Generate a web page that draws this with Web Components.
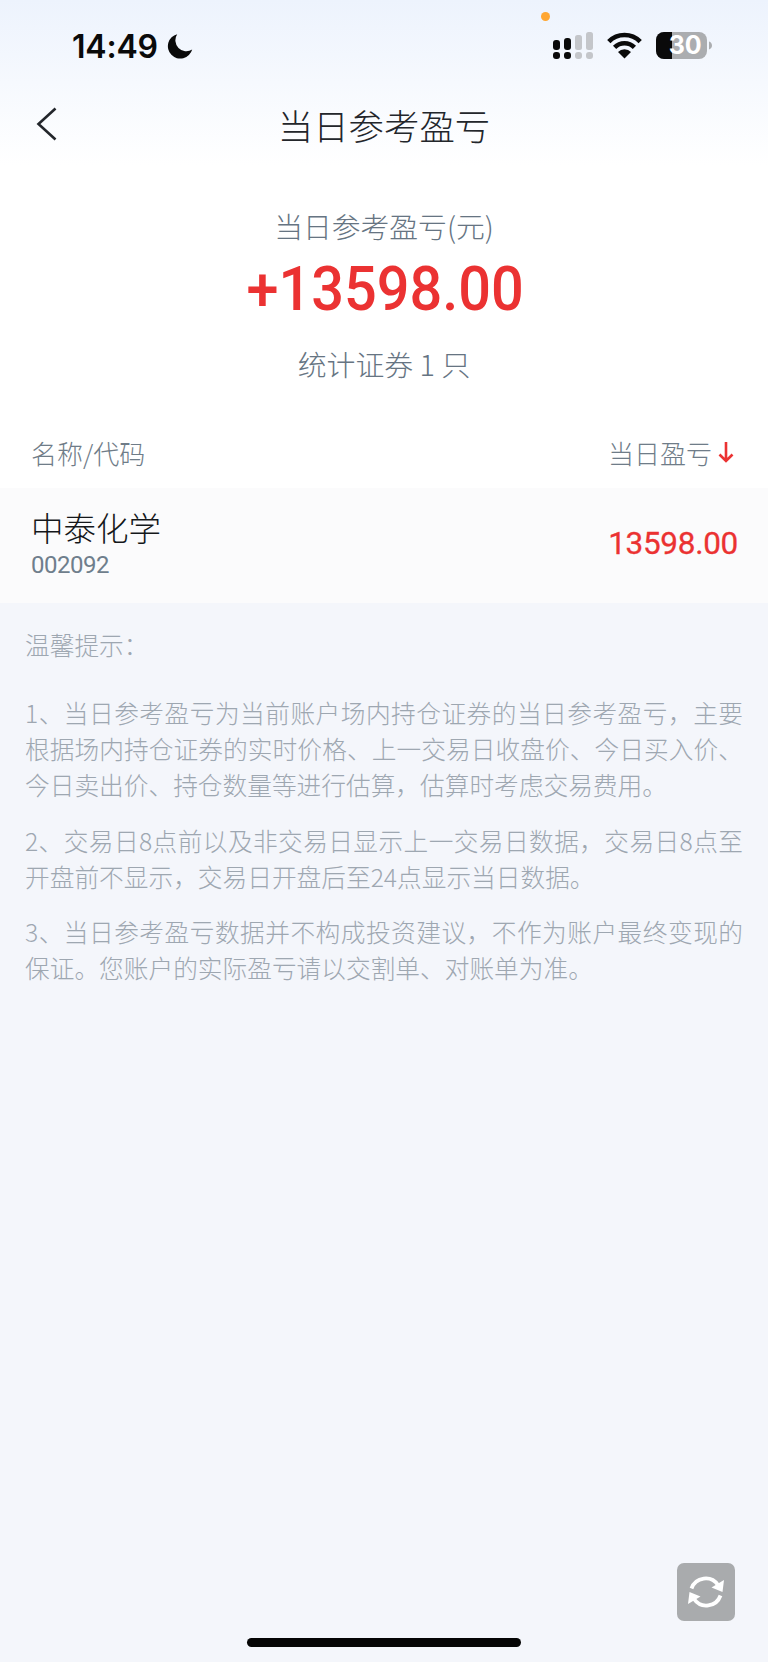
<!DOCTYPE html>
<html lang="zh-CN"><head><meta charset="utf-8"><title>当日参考盈亏</title>
<style>
html,body{margin:0;padding:0}
body{width:768px;height:1662px;overflow:hidden;font-family:"Noto Sans CJK SC",Roboto,sans-serif;background:#f4f6fb}
</style></head><body>
<pnl-app>
  <status-bar slot="top"></status-bar>
  <nav-bar slot="top">当日参考盈亏</nav-bar>
  <pnl-summary slot="top" label="当日参考盈亏(元)" value="+13598.00" count="统计证券 1 只"></pnl-summary>
  <table-head slot="top" left="名称/代码" right="当日盈亏"></table-head>
  <stock-row name="中泰化学" code="002092" value="13598.00"></stock-row>
  <tips-block heading="温馨提示&#xFF1A;">
    <p>1、当日参考盈亏为当前账户场内持仓证券的当日参考盈亏&#xFF0C;主要根据场内持仓证券的实时价格、上一交易日收盘价、今日买入价、今日卖出价、持仓数量等进行估算&#xFF0C;估算时考虑交易费用。</p>
    <p>2、交易日8点前以及非交易日显示上一交易日数据&#xFF0C;交易日8点至开盘前不显示&#xFF0C;交易日开盘后至24点显示当日数据。</p>
    <p>3、当日参考盈亏数据并不构成投资建议&#xFF0C;不作为账户最终变现的保证。您账户的实际盈亏请以交割单、对账单为准。</p>
  </tips-block>
  <refresh-button slot="over"></refresh-button>
  <home-indicator slot="over"></home-indicator>
</pnl-app>
<script>
function def(name, html, init){
  customElements.define(name, class extends HTMLElement{
    constructor(){super();this.attachShadow({mode:'open'}).innerHTML=html;}
    connectedCallback(){ if(init) init(this, this.shadowRoot); }
  });
}
const txt=(r,id,v)=>{r.getElementById(id).textContent=v;};

def('pnl-app',`<style>
:host{display:block;position:relative;width:768px;height:1662px;overflow:hidden;background:#f4f6fb}
.top{background:linear-gradient(#edf3fd 0,#ffffff 165px,#ffffff 100%)}
</style><div class="top"><slot name="top"></slot></div><slot></slot><slot name="over"></slot>`);

def('status-bar',`<style>
:host{display:flex;align-items:flex-start;justify-content:space-between;height:88px;box-sizing:border-box;padding:0 0 0 72px;position:relative}
.l{display:flex;align-items:center;gap:9px;margin-top:26px;height:40px}
.t{font:600 32px/40px Inter,Roboto,sans-serif;color:#0a0a0a;letter-spacing:-.2px;position:relative;top:1px}
.r{display:flex;align-items:center;gap:14px;margin:32px 0 0 0;padding-right:56px}
.dot{position:absolute;left:541px;top:12px;width:9px;height:9px;border-radius:50%;background:#ffa733}
.bat{position:relative;display:block;width:56px;height:27px}
.n{position:absolute;left:11px;top:0;width:36px;text-align:center;font:700 25px/27px Inter,Roboto,sans-serif;color:#fff;letter-spacing:-.2px}
</style>
<div class="l"><span class="t">14:49</span>
<svg width="26" height="26" viewBox="0 0 26 26"><path fill="#0a0a0a" d="M10.2 1.2A12.4 12.4 0 1 0 25.2 16.6 11 11 0 0 1 10.2 1.2Z"/></svg></div>
<div class="dot"></div>
<div class="r">
<svg width="40" height="27" viewBox="0 0 40 27">
<g fill="#0a0a0a"><rect x="0" y="8" width="7" height="10" rx="3"/><rect x="11" y="6" width="7" height="12" rx="3"/><rect x="0" y="20" width="7" height="7" rx="3"/><rect x="11" y="20" width="7" height="7" rx="3"/></g>
<g fill="#c4c6ca"><rect x="22" y="3" width="7" height="15" rx="2.5"/><rect x="33" y="0" width="7" height="18" rx="2.5"/><rect x="22" y="20" width="7" height="7" rx="3"/><rect x="33" y="20" width="7" height="7" rx="3"/></g></svg>
<svg width="35" height="27" viewBox="0 0 35 27" fill="none" stroke="#0a0a0a" stroke-width="4.6"><path d="M1.8 9.6a22 22 0 0 1 31.4 0"/><path d="M7.6 15.4a14 14 0 0 1 19.8 0"/><path fill="#0a0a0a" stroke="none" d="M17.5 26.6 11 20a9 9 0 0 1 13 0Z"/></svg>
<span class="bat"><svg width="56" height="27" viewBox="0 0 56 27"><rect width="51" height="27" rx="8" fill="#abadb0"/><path d="M8 0H16V27H8A8 8 0 0 1 0 19V8A8 8 0 0 1 8 0Z" fill="#0a0a0a"/><path d="M53 9.5c1.8.6 3 2.200 3 4s-1.200 3.400-3 4Z" fill="#abadb0"/></svg><span class="n">30</span></span>
</div>`);

def('nav-bar',`<style>
:host{display:flex;align-items:center;justify-content:center;position:relative;height:72px;font-size:35.400px;font-weight:300;color:#23262b}
svg{position:absolute;left:36px;top:19px}
</style><svg width="22" height="34" viewBox="0 0 22 34" fill="none" stroke="#23262b" stroke-width="2.6"><path d="M19.500 1.500 2.500 17l17 15.500"/></svg><slot></slot>`);

def('pnl-summary',`<style>
:host{display:flex;flex-direction:column;align-items:center;padding-top:46px}
#l{font-size:28.800px;font-weight:300;line-height:40px;color:#667482;height:40px}
#v{font:500 62px/70px Roboto,sans-serif;color:#eb3232;transform:translateX(1px) scaleX(.93);margin-top:8px}
#c{font-size:28.900px;font-weight:300;line-height:40px;color:#667482;margin-top:19px}
</style><div id="l"></div><div id="v"></div><div id="c"></div>`,(h,r)=>{txt(r,'l',h.getAttribute('label'));txt(r,'v',h.getAttribute('value'));txt(r,'c',h.getAttribute('count'));});

def('table-head',`<style>
:host{display:flex;align-items:center;justify-content:space-between;height:105px;box-sizing:border-box;padding:33px 34px 0 31px;font-size:26px;font-weight:300;color:#6f7c88}
.r{display:flex;align-items:center;gap:6px}
</style><span id="a"></span><span class="r"><span id="b"></span>
<svg width="16" height="22" viewBox="0 0 16 22" fill="none" stroke="#eb3232" stroke-width="2.600"><path d="M8 1v19M1.500 13.500 8 20l6.500-6.500"/></svg></span>`,(h,r)=>{txt(r,'a',h.getAttribute('left'));txt(r,'b',h.getAttribute('right'));});

def('stock-row',`<style>
:host{display:flex;align-items:center;justify-content:space-between;height:115px;box-sizing:border-box;padding:0 30px 0 31px;background:#fbfbfc}
.n{font-size:32.500px;font-weight:300;line-height:40px;color:#14171a;margin-top:-6px}
.c{font:400 24px/28px Roboto,sans-serif;color:#6f7e8c;letter-spacing:-.5px;margin-top:4px}
.v{font:400 31.500px/40px Roboto,sans-serif;color:#eb3232;margin-top:-3px;letter-spacing:-.3px;-webkit-text-stroke:.3px #eb3232}
</style><div><div class="n" id="n"></div><div class="c" id="c"></div></div><div class="v" id="v"></div>`,(h,r)=>{txt(r,'n',h.getAttribute('name'));txt(r,'c',h.getAttribute('code'));txt(r,'v',h.getAttribute('value'));});

def('tips-block',`<style>
:host{display:block;box-sizing:border-box;padding:23px 25px 0 25px;font-size:24.700px;font-weight:300;line-height:36px;color:#9ea7b1}
.h{height:36px;margin-bottom:32px}
::slotted(p){margin:0 0 19.500px;text-align:justify}
</style><div class="h" id="h"></div><slot></slot>`,(h,r)=>{txt(r,'h',h.getAttribute('heading'));});

def('refresh-button',`<style>
:host{position:absolute;left:677px;top:1563px;width:58px;height:58px;border-radius:7px;background:#a9abad;display:flex;align-items:center;justify-content:center}
</style><svg width="38" height="36" viewBox="0 0 38 36" fill="none"><path d="M4.500 14.500A15 15 0 0 1 31 11" stroke="#fff" stroke-width="3.800"/><path d="M33.500 21.500A15 15 0 0 1 7 25" stroke="#fff" stroke-width="3.800"/><path fill="#fff" d="M37 6 35.500 18 24.500 13.500Z"/><path fill="#fff" d="M1 30 2.500 18 13.500 22.500Z"/></svg>`);

def('home-indicator',`<style>
:host{position:absolute;left:247px;top:1638px;width:274px;height:9px;border-radius:5px;background:#050505}
</style>`);
</script>
</body></html>
